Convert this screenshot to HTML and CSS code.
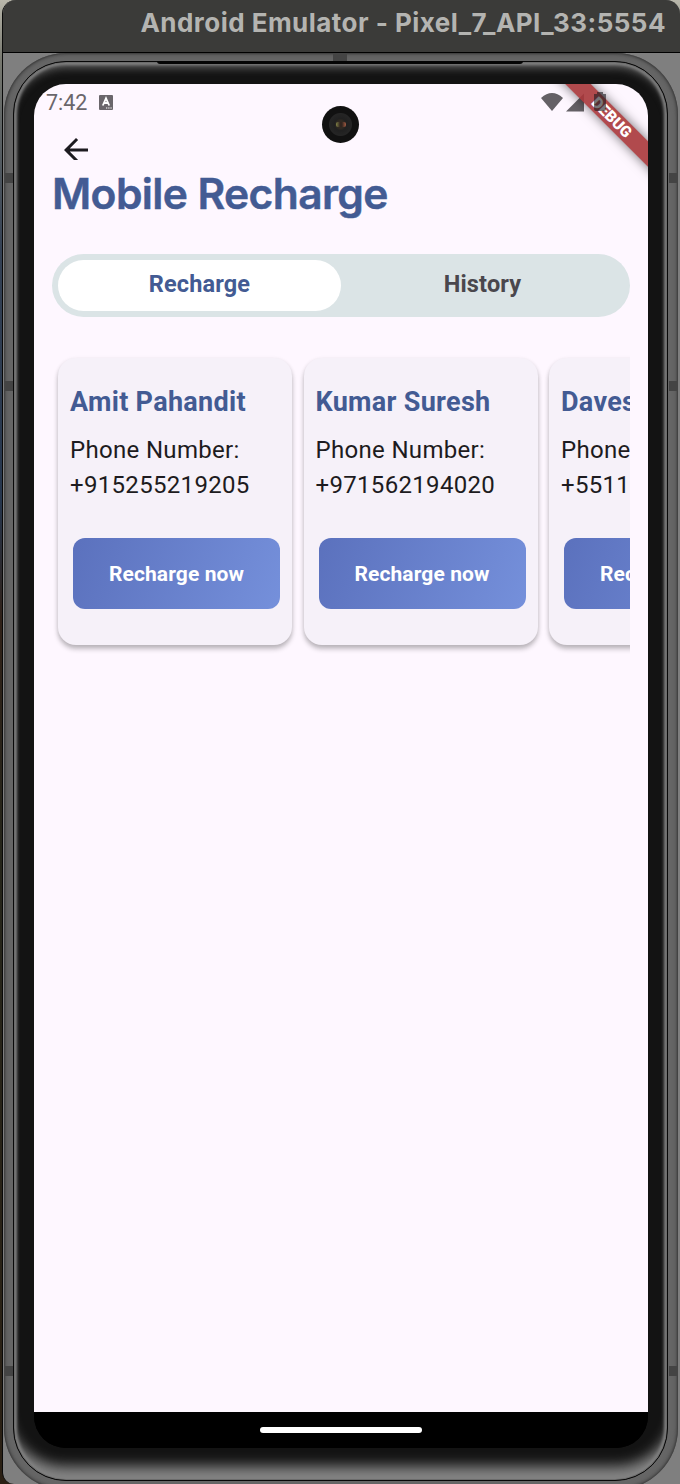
FILE: index.html
```html
<!DOCTYPE html>
<html lang="en">
<head>
<meta charset="utf-8">
<title>Android Emulator</title>
<link rel="stylesheet" href="styles.css">
</head>
<body>
<div class="window">
  <header class="titlebar"><span class="window-title">Android Emulator - Pixel_7_API_33:5554</span></header>
  <div class="stage">
    <div class="rim">
      <i class="notch left n1"></i><i class="notch left n2"></i><i class="notch left n3"></i>
      <i class="notch right n1"></i><i class="notch right n2"></i><i class="notch right n3"></i>
      <i class="notch top"></i>
      <div class="bezel">
        <i class="speaker"></i>
        <div class="screen">
          <div class="statusbar">
            <span class="time">7:42</span>
            <svg class="badge" viewBox="0 0 14 15"><rect width="14" height="15" rx="1" fill="#6a666b"/><path d="M3.8 10.5 7 3.3 10.2 10.5M5 8h4" fill="none" stroke="#fff" stroke-width="1.8"/><path d="M7 13h1.3M9.2 13h1.3M11.4 13h1.3" stroke="#fff" stroke-width="1.2"/></svg>
            <span class="grow"></span>
            <svg class="wifi" viewBox="0 0 22 18"><path d="M11 18 0 5Q11-5 22 5Z" fill="#656166"/></svg>
            <svg class="signal" viewBox="0 0 19 19"><path d="M0 19 19 0V19Z" fill="#656166"/></svg>
          </div>
          <div class="camera"><i></i></div>
          <div class="app">
            <div class="appbar"><svg class="back" viewBox="0 0 24 24"><path d="M20 11H7.83l5.59-5.59L12 4l-8 8 8 8 1.41-1.41L7.83 13H20z" fill="#1d1b20"/></svg></div>
            <h1 class="heading">Mobile Recharge</h1>
            <div class="tabs"><div class="tab active">Recharge</div><div class="tab">History</div></div>
            <div class="cards">
              <section class="card"><h2 class="name">Amit Pahandit</h2><p class="phone">Phone Number:<br>+915255219205</p><div class="button">Recharge now</div></section>
              <section class="card"><h2 class="name">Kumar Suresh</h2><p class="phone">Phone Number:<br>+971562194020</p><div class="button">Recharge now</div></section>
              <section class="card"><h2 class="name">Davesh</h2><p class="phone">Phone Number:<br>+5511</p><div class="button">Recharge now</div></section>
            </div>
          </div>
          <div class="navbar"><i class="handle"></i></div>
          <div class="debug">DEBUG</div>
          <svg class="battery" viewBox="0 0 12 19"><path d="M3 0h6v2h3v15q0 2-2 2H2q-2 0-2-2V2h3Z" fill="#1d1b20"/></svg>
        </div>
      </div>
    </div>
  </div>
</div>
</body>
</html>
```
FILE: styles.css
```css
* { box-sizing: border-box; }
body { margin: 0; width: 680px; height: 1484px; overflow: hidden; padding-left: 2px; font-family: Roboto, sans-serif; background: linear-gradient(#b9b7ab 0, #77786f 60px, #344154 250px, #26364d 500px, #302118 620px, #25251a 850px, #2b2014 1484px); }
.window { width: 678px; height: 1484px; background: #7f7f7f; border-left: 1px solid #090909; border-radius: 14px 14px 0 12px; overflow: hidden; }
.titlebar { height: 53px; background: #3b3b39; border-bottom: 1px solid #000; display: flex; align-items: center; justify-content: flex-end; padding: 0 14px 7px 0; }
.window-title { font: 700 26px/30px Inter, sans-serif; color: #b4b4b1; white-space: nowrap; letter-spacing: .47px; }
.stage { height: 1431px; padding-left: 1px; }
.rim { position: relative; width: 674px; height: 1437px; border-radius: 62px; padding: 8px 9px; background: #666; box-shadow: inset 0 0 2px 1px #3c3c3c, inset 0 0 4px 2px #555; }
.bezel { position: relative; width: 655px; height: 1420px; border-radius: 53px; border: 1px solid #080808; background: #131313; padding: 22px 20px 31px; box-shadow: inset 0 0 0 1px #6c6c6c, inset 0 0 3px 3px #808080, inset 0 10px 8px -4px #5c5c5c, inset 0 -22px 13px -8px #858585; }
.speaker { position: absolute; left: 143px; top: -1px; width: 366px; height: 3px; background: #050505; border-radius: 0 0 3px 3px; }
.notch { position: absolute; width: 9px; height: 10px; background: #444; }
.left { left: 0; } .right { right: 0; }
.n1 { top: 120px; } .n2 { top: 328px; } .n3 { top: 1313px; }
.top { left: 329px; top: 0; width: 14px; height: 8px; }
.screen { position: relative; width: 614px; height: 1364px; border-radius: 32px; background: linear-gradient(#fef7ff 0 1328px, #000 0); overflow: hidden; display: flex; flex-direction: column; }
.statusbar { height: 38px; display: flex; align-items: center; padding: 0 64px 0 12px; color: #6a666b; }
.time { font-size: 21.5px; line-height: 26px; width: 53px; }
.badge { width: 14px; height: 15px; margin-top: -2px; }
.grow { flex: 1; }
.wifi { width: 22px; height: 18px; margin: -2px 3px 0 0; }
.signal { width: 18px; height: 19px; margin-top: -2px; }
.camera { position: absolute; left: 288px; top: 22px; width: 37px; height: 37px; border-radius: 50%; background: radial-gradient(circle, #302922 0 4px, #202020 6px, #252525 11px, #111 12px); display: flex; align-items: center; justify-content: center; }
.camera i { width: 10px; height: 5px; border-radius: 2px; background: linear-gradient(90deg, #828448, #32251f 40% 60%, #a65d43); }
.app { height: 1290px; padding: 0 18px; }
.appbar { height: 38px; padding: 9.5px 0 0 6px; overflow: hidden; }
.back { display: block; width: 36px; height: 36px; }
.heading { margin: 0; height: 94px; padding-top: 8px; font: 600 42.5px/52px Inter, sans-serif; color: #435b93; white-space: nowrap; letter-spacing: -.6px; -webkit-text-stroke: .5px #435b93; }
.tabs { height: 63px; padding: 6px; border-radius: 32px; background: #dbe4e6; display: flex; }
.tab { flex: 1; height: 51px; border-radius: 26px; display: flex; align-items: center; justify-content: center; padding-bottom: 3px; font-weight: 700; font-size: 23.5px; letter-spacing: .15px; color: #4a474d; }
.active { background: #fff; color: #435b93; }
.cards { display: flex; gap: 11.5px; overflow: hidden; margin-top: 35px; padding: 6px 6px 12px; }
.card { flex: 0 0 234px; height: 287px; border-radius: 18px; background: #f6f1f9; padding: 27px 12px 0; box-shadow: 0 4px 5px rgba(0,0,0,.24), 0 1px 4px rgba(0,0,0,.08); }
.name { margin: 0; font-size: 27px; line-height: 34px; letter-spacing: .3px; color: #435b93; white-space: nowrap; }
.phone { margin: 14px 0 0; font-size: 24px; line-height: 35px; letter-spacing: .32px; color: #1d1b20; white-space: nowrap; }
.button { width: 207px; height: 71px; margin: 35px 0 0 3px; border-radius: 12px; display: flex; align-items: center; justify-content: center; font-size: 21px; letter-spacing: .1px; font-weight: 700; color: #fff; background: linear-gradient(110deg, #5b71bd, #7590db); }
.navbar { height: 36px; background: #000; display: flex; align-items: center; justify-content: center; }
.handle { width: 162px; height: 6px; border-radius: 3px; background: #fff; }
.debug { position: absolute; left: 478.5px; top: 26px; width: 200px; height: 18px; transform: rotate(45deg); background: rgba(168,54,58,.9); box-shadow: 0 0 12px rgba(0,0,0,.55); color: #fff; font-size: 15.5px; font-weight: 900; line-height: 18px; text-align: center; padding-right: 4px; }
.battery { position: absolute; left: 560px; top: 8px; width: 12px; height: 19px; opacity: .6; }
```
